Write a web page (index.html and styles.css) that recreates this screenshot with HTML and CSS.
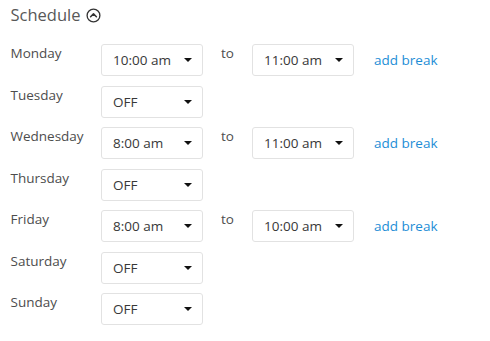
FILE: index.html
```html
<!DOCTYPE html>
<html>
<head>
<meta charset="utf-8">
<link rel="stylesheet" href="styles.css">
</head>
<body>
<div class="schedule">
  <div class="title">
    <span>Schedule</span>
    <svg class="toggle" width="15" height="15" viewBox="0 0 15 15"><circle cx="7.5" cy="7.5" r="6.4" fill="none" stroke="#333" stroke-width="1.3"/><path d="M4.6 8.8 L7.5 5.9 L10.4 8.8" fill="none" stroke="#333" stroke-width="1.5" stroke-linecap="round" stroke-linejoin="round"/></svg>
  </div>
  <div class="rows">
    <div class="row">
      <div class="day">Monday</div>
      <div class="select"><span>10:00 am</span><i class="caret"></i></div>
      <div class="to">to</div>
      <div class="select"><span>11:00 am</span><i class="caret"></i></div>
      <a class="add">add break</a>
    </div>
    <div class="row">
      <div class="day">Tuesday</div>
      <div class="select"><span>OFF</span><i class="caret"></i></div>
    </div>
    <div class="row">
      <div class="day">Wednesday</div>
      <div class="select"><span>8:00 am</span><i class="caret"></i></div>
      <div class="to">to</div>
      <div class="select"><span>11:00 am</span><i class="caret"></i></div>
      <a class="add">add break</a>
    </div>
    <div class="row">
      <div class="day">Thursday</div>
      <div class="select"><span>OFF</span><i class="caret"></i></div>
    </div>
    <div class="row">
      <div class="day">Friday</div>
      <div class="select"><span>8:00 am</span><i class="caret"></i></div>
      <div class="to">to</div>
      <div class="select"><span>10:00 am</span><i class="caret"></i></div>
      <a class="add">add break</a>
    </div>
    <div class="row">
      <div class="day">Saturday</div>
      <div class="select"><span>OFF</span><i class="caret"></i></div>
    </div>
    <div class="row">
      <div class="day">Sunday</div>
      <div class="select"><span>OFF</span><i class="caret"></i></div>
    </div>
  </div>
</div>
</body>
</html>
```
FILE: styles.css
```css
html, body {
  margin: 0;
  padding: 0;
  background: #fff;
}
.schedule {
  padding: 4px 10px 0 10.5px;
  font-family: "Open Sans", "Liberation Sans", sans-serif;
}
.title {
  display: flex;
  align-items: center;
  height: 22px;
  font-size: 16.5px;
  line-height: 22px;
  color: #585858;
}
.toggle {
  margin-left: 6px;
}
.rows {
  margin-top: 18px;
  display: flex;
  flex-direction: column;
  gap: 9.5px;
}
.row {
  display: flex;
  align-items: flex-start;
  height: 32px;
}
.day {
  width: 90.5px;
  font-size: 13.5px;
  line-height: 17px;
  padding-top: 1px;
  color: #4d4d4d;
}
.select {
  box-sizing: border-box;
  width: 102px;
  height: 32px;
  border: 1px solid #e2e2e2;
  border-radius: 3px;
  padding: 0 10px 0 11px;
  display: flex;
  align-items: center;
  justify-content: space-between;
  font-size: 13.5px;
  color: #383838;
}
.caret {
  width: 0;
  height: 0;
  border-left: 4px solid transparent;
  border-right: 4px solid transparent;
  border-top: 4.5px solid #111;
}
.to {
  width: 49px;
  text-align: center;
  font-size: 13.5px;
  line-height: 17px;
  padding-top: 1px;
  color: #4d4d4d;
}
.add {
  margin-left: 20px;
  line-height: 32px;
  font-size: 13.5px;
  color: #1d8dd6;
  cursor: pointer;
}
```
